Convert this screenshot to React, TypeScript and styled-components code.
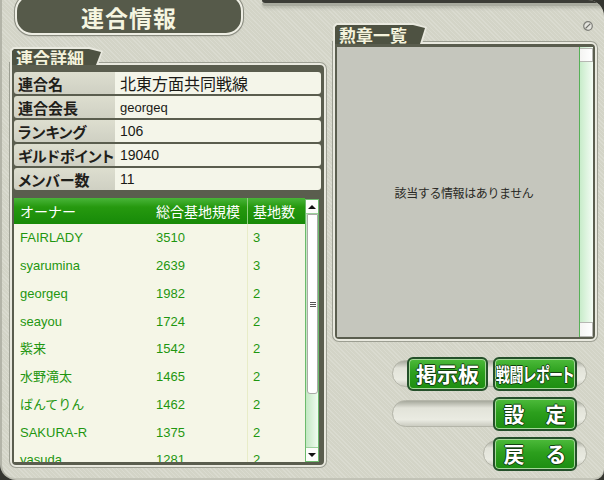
import React from 'react';
import styled, { createGlobalStyle } from 'styled-components';

const JP = `"Noto Sans CJK JP", "Noto Sans", sans-serif`;
const LATIN = `"Liberation Sans", "Noto Sans CJK JP", sans-serif`;

const GlobalStyle = createGlobalStyle`
  html, body {
    margin: 0;
    padding: 0;
    background: #34352f;
  }
  body {
    width: 604px;
    height: 480px;
    overflow: hidden;
    font-family: ${LATIN};
  }
`;

// 外枠
const Screen = styled.div`
  position: relative;
  width: 604px;
  height: 480px;
  box-sizing: border-box;
  display: grid;
  grid-template-columns: 316px 264px;
  column-gap: 7px;
  align-items: start;
  padding-left: 10px;
  background-color: #d3d4c7;
  background-image: repeating-linear-gradient(45deg, rgba(255, 255, 255, 0.16) 0 1px, transparent 1px 3px);
  border-radius: 0 16px 10px 16px;
  box-shadow: inset 2px 0 0 #b3b4a8, inset 0 -2px 0 #c2c3b7;
  overflow: hidden;

  &::before {
    content: '';
    position: absolute;
    top: 0;
    left: 262px;
    right: 0;
    height: 3px;
    background: #3b3c36;
    border-bottom-left-radius: 5px;
    box-shadow: 0 3px 0 #a9ab9f, 0 5px 3px rgba(150, 152, 140, 0.5);
  }
`;

const Column = styled.div<{ $top?: number }>`
  display: flex;
  flex-direction: column;
  padding-top: ${(p) => p.$top ?? 0}px;
`;

const Title = styled.h1`
  margin: -6px 0 12px 5px;
  width: 228px;
  height: 41px;
  box-sizing: border-box;
  padding-top: 5px;
  border: 2px solid #eeeee4;
  border-radius: 17px;
  box-shadow: 0 0 0 1px #8a8c80, 0 1px 2px rgba(0, 0, 0, 0.25);
  background: #565a4a;
  display: flex;
  align-items: center;
  justify-content: center;
  font: 700 23px ${JP};
  color: #f5f5e0;
  letter-spacing: 1px;
`;

// タブ
const TabOuter = styled.div<{ $w: number; $h: number }>`
  position: relative;
  z-index: 1;
  width: ${(p) => p.$w}px;
  height: ${(p) => p.$h}px;
  box-sizing: border-box;
  padding: 2px 2px 0 2px;
  background: #e9e9df;
  clip-path: polygon(0 3px, 3px 0, calc(100% - 13px) 0, 100% 4px, calc(100% - 5px) 100%, 0 100%);
`;

const TabInner = styled.div`
  height: 100%;
  box-sizing: border-box;
  padding-left: 4px;
  background: #4e5242;
  clip-path: polygon(0 2px, 2px 0, calc(100% - 12px) 0, 100% 3px, calc(100% - 5px) 100%, 0 100%);
  font: 700 17px/1 ${JP};
  color: #f4f3dc;
  display: flex;
  align-items: center;
  white-space: nowrap;
`;

const TabRow = styled.div`
  position: relative;
  z-index: 1;
  margin-bottom: -2px;
  display: flex;
  justify-content: space-between;
  align-items: flex-start;
`;

const Panel = styled.div<{ $h: number }>`
  height: ${(p) => p.$h}px;
  box-sizing: border-box;
  background: #5a5d4e;
  border: 2px solid #e9e9df;
  border-radius: 0 6px 6px 6px;
  box-shadow: 0 0 0 1px #9c9e92;
`;

const DetailPanel = styled(Panel)`
  padding: 7px 3px 3px 2px;
  display: flex;
  flex-direction: column;
`;

// 連合詳細
const InfoList = styled.div`
  display: flex;
  flex-direction: column;
  gap: 2px;
`;

const InfoRow = styled.div`
  display: grid;
  grid-template-columns: 101px 1fr;
  height: 22px;
  border-radius: 3px;
  overflow: hidden;
  box-shadow: inset 0 0 0 1px rgba(60, 62, 50, 0.35);
`;

const InfoLabel = styled.div`
  background: linear-gradient(#dddecf, #cfd0c3);
  padding-left: 4px;
  display: flex;
  align-items: center;
  font: 700 15px/1 ${JP};
  font-feature-settings: 'palt';
  color: #1f201a;
  white-space: nowrap;
`;

const InfoValue = styled.div<{ $jp?: boolean; $size: number }>`
  background: #f4f5e9;
  padding-left: 5px;
  display: flex;
  align-items: center;
  font-family: ${(p) => (p.$jp ? JP : LATIN)};
  font-size: ${(p) => p.$size}px;
  line-height: 1;
  color: #1a1a16;
  white-space: nowrap;
`;

// メンバー表
const Table = styled.div`
  margin: 8px 2px 0 0;
  height: 264px;
  display: grid;
  grid-template-columns: 291px 14px;
  overflow: hidden;
`;

const TableMain = styled.div`
  display: flex;
  flex-direction: column;
  min-height: 0;
  background: #f5f6e7;
`;

const COLS = '136px 97px 1fr';

const HeaderRow = styled.div`
  display: grid;
  grid-template-columns: ${COLS};
  height: 26px;
  flex-shrink: 0;
  background: linear-gradient(#49b539 0, #26990f 35%, #178a08 100%);
`;

const HeaderCell = styled.div<{ $divider?: boolean }>`
  display: flex;
  align-items: center;
  font: 14px/1 ${JP};
  color: #ffffff;
  border-left: ${(p) => (p.$divider ? '1px solid #8fd080' : 'none')};
  padding-left: ${(p) => (p.$divider ? '5px' : '6px')};
  white-space: nowrap;
`;

const TableBody = styled.div`
  flex: 1;
  overflow: hidden;
`;

const BodyRow = styled.div`
  display: grid;
  grid-template-columns: ${COLS};
  height: 27.75px;
`;

const BodyCell = styled.div<{ $divider?: boolean }>`
  display: flex;
  align-items: center;
  padding-left: ${(p) => (p.$divider ? '5px' : '6px')};
  border-left: ${(p) => (p.$divider ? '1px solid #e8ecc8' : 'none')};
  font: 13px/1 ${LATIN};
  color: #1f9610;
  white-space: nowrap;
`;

// スクロールバー
const ScrollBar = styled.div`
  display: flex;
  flex-direction: column;
  box-sizing: border-box;
  margin-top: 1px;
  border: 1px solid #6cba6c;
  background: linear-gradient(90deg, #c2e8c2, #f0fcf0);
`;

const ArrowButton = styled.div<{ $down?: boolean }>`
  height: 13px;
  flex-shrink: 0;
  background: #fdfdfb;
  border-bottom: ${(p) => (p.$down ? 'none' : '1px solid #9ccf9c')};
  border-top: ${(p) => (p.$down ? '1px solid #9ccf9c' : 'none')};
  display: flex;
  align-items: center;
  justify-content: center;
  margin-top: ${(p) => (p.$down ? 'auto' : '0')};

  &::after {
    content: '';
    border-left: 4px solid transparent;
    border-right: 4px solid transparent;
    ${(p) => (p.$down ? 'border-top: 4px solid #111;' : 'border-bottom: 4px solid #111;')}
  }
`;

const Thumb = styled.div`
  height: 180px;
  margin: 0 0 0 1px;
  box-sizing: border-box;
  background: #ffffff;
  border: 1px solid #a9aaa6;
  border-radius: 0 0 3px 3px;
  display: flex;
  align-items: center;
  justify-content: center;
`;

const Grip = styled.div`
  width: 6px;
  height: 5px;
  background: repeating-linear-gradient(#555 0 1px, transparent 1px 2px);
`;

// 勲章一覧
const MedalPanel = styled(Panel)`
  padding: 3px 2px 2px 2px;
  display: grid;
  grid-template-columns: 1fr 14px;
`;

const MedalArea = styled.div`
  background: #c5c6bd;
  display: flex;
  align-items: center;
  justify-content: center;
  padding-left: 12px;
  font: 12px ${JP};
  letter-spacing: -0.4px;
  color: #2a2a26;
`;

const MedalScroll = styled.div`
  display: flex;
  flex-direction: column;
  justify-content: space-between;
  padding-top: 1px;
  border-left: 1px solid #58b058;
  background: linear-gradient(90deg, #c8ecca, #f4fcf4);
`;

const ScrollCap = styled.div<{ $h: number }>`
  height: ${(p) => p.$h}px;
  background: linear-gradient(90deg, #f4f4f2, #ffffff);
  border: 1px solid #b6b7b2;
  border-left: none;
`;

const GearIcon = styled.svg`
  margin: -2px 4px 0 0;
  flex-shrink: 0;
`;

// ボタン
const ButtonStack = styled.div`
  margin-top: 19px;
  padding-right: 10px;
  display: flex;
  flex-direction: column;
  align-items: flex-end;
  gap: 13px;
`;

const Slot = styled.div<{ $w: number }>`
  width: ${(p) => p.$w}px;
  height: 27px;
  box-sizing: border-box;
  border-radius: 14px;
  border: 1px solid #b4b5a9;
  background: linear-gradient(#a7a99d, #e2e3d9 28%, #eaebe2 75%, #cbccc1);
  display: flex;
  justify-content: flex-end;
  align-items: center;
  gap: 5px;
  padding-right: 9px;
`;

const GreenButton = styled.button<{ $w: number }>`
  width: ${(p) => p.$w}px;
  height: 34px;
  margin: -4px 0;
  flex-shrink: 0;
  box-sizing: border-box;
  padding: 0;
  border: 2px solid #24502a;
  border-radius: 6px;
  background: linear-gradient(#4dbb3b, #2c9f1d 45%, #1c8d11);
  box-shadow: inset 0 0 0 1px #a4d898;
  display: flex;
  align-items: center;
  justify-content: center;
  font: 700 21px/1 ${JP};
  color: #ffffff;
  text-shadow: 1px 0 0 #134010, -1px 0 0 #134010, 0 1px 0 #134010, 0 -1px 0 #134010;
  white-space: nowrap;
  cursor: pointer;
`;

const Narrow = styled.span`
  display: inline-block;
  font-size: 19px;
  font-feature-settings: 'palt';
  transform: scaleX(0.74);
  letter-spacing: -0.5px;
`;

const details: { label: string; value: string; jp?: boolean; size: number }[] = [
  { label: '連合名', value: '北東方面共同戦線', jp: true, size: 16 },
  { label: '連合会長', value: 'georgeq', size: 13 },
  { label: 'ランキング', value: '106', size: 14 },
  { label: 'ギルドポイント', value: '19040', size: 14 },
  { label: 'メンバー数', value: '11', size: 14 },
];

const members: [string, string, string][] = [
  ['FAIRLADY', '3510', '3'],
  ['syarumina', '2639', '3'],
  ['georgeq', '1982', '2'],
  ['seayou', '1724', '2'],
  ['紫来', '1542', '2'],
  ['水野滝太', '1465', '2'],
  ['ばんてりん', '1462', '2'],
  ['SAKURA-R', '1375', '2'],
  ['yasuda', '1281', '2'],
];

export default function App() {
  return (
    <Screen>
      <GlobalStyle />
      <Column>
        <Title>連合情報</Title>
        <TabRow>
          <TabOuter $w={93} $h={18}>
            <TabInner>連合詳細</TabInner>
          </TabOuter>
        </TabRow>
        <DetailPanel $h={404}>
          <InfoList>
            {details.map((d) => (
              <InfoRow key={d.label}>
                <InfoLabel>{d.label}</InfoLabel>
                <InfoValue $jp={d.jp} $size={d.size}>{d.value}</InfoValue>
              </InfoRow>
            ))}
          </InfoList>
          <Table>
            <TableMain>
              <HeaderRow>
                <HeaderCell>オーナー</HeaderCell>
                <HeaderCell>総合基地規模</HeaderCell>
                <HeaderCell $divider>基地数</HeaderCell>
              </HeaderRow>
              <TableBody>
                {members.map(([name, size, count]) => (
                  <BodyRow key={name}>
                    <BodyCell>{name}</BodyCell>
                    <BodyCell>{size}</BodyCell>
                    <BodyCell $divider>{count}</BodyCell>
                  </BodyRow>
                ))}
              </TableBody>
            </TableMain>
            <ScrollBar>
              <ArrowButton />
              <Thumb>
                <Grip />
              </Thumb>
              <ArrowButton $down />
            </ScrollBar>
          </Table>
        </DetailPanel>
      </Column>

      <Column $top={23}>
        <TabRow>
          <TabOuter $w={94} $h={21}>
            <TabInner>勲章一覧</TabInner>
          </TabOuter>
          <GearIcon width="10" height="10" viewBox="0 0 10 10">
            <circle cx="5" cy="5" r="4.3" fill="#e4e4de" stroke="#7d7e78" strokeWidth="1.2" />
            <line x1="2.6" y1="7.4" x2="7.4" y2="2.6" stroke="#6d6e68" strokeWidth="1.3" />
          </GearIcon>
        </TabRow>
        <MedalPanel $h={299}>
          <MedalArea>該当する情報はありません</MedalArea>
          <MedalScroll>
            <ScrollCap $h={12} />
            <ScrollCap $h={13} />
          </MedalScroll>
        </MedalPanel>
        <ButtonStack>
          <Slot $w={195}>
            <GreenButton $w={81}>掲示板</GreenButton>
            <GreenButton $w={84}>
              <Narrow>戦闘レポート</Narrow>
            </GreenButton>
          </Slot>
          <Slot $w={195}>
            <GreenButton $w={84}>設　定</GreenButton>
          </Slot>
          <Slot $w={104}>
            <GreenButton $w={84}>戻　る</GreenButton>
          </Slot>
        </ButtonStack>
      </Column>
    </Screen>
  );
}
